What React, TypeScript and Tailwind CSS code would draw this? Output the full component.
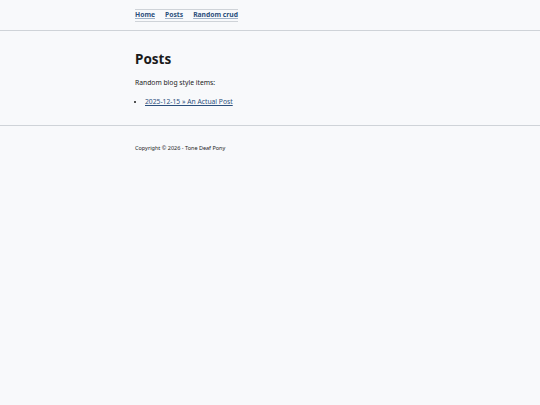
export default function App() {
  return (
    <div className="min-h-[405px] bg-[#f8f9fb] text-[#1b1b1b] text-[6.75px] leading-[1.5]" style={{ fontFamily: '"Noto Sans", sans-serif' }}>
      <header className="border-b border-[#cfd3d8] pt-[9px] pb-[8px]">
        <div className="mx-auto w-[270px]">
          <nav className="inline-flex gap-[10px] border-y border-[#cfd3d8] leading-[10px] pb-[1px]">
            <a href="#" className="font-bold text-[#2b4f7c] underline decoration-[#9fb2c8]">Home</a>
            <a href="#" className="font-bold text-[#2b4f7c] underline decoration-[#9fb2c8]">Posts</a>
            <a href="#" className="font-bold text-[#2b4f7c] underline decoration-[#9fb2c8]">Random crud</a>
          </nav>
        </div>
      </header>
      <main className="mx-auto w-[270px] pt-[20px] pb-[18px]">
        <h1 className="text-[13.5px] font-bold leading-[1.3] mb-[9px]">Posts</h1>
        <p className="mb-[9px]">Random blog style items:</p>
        <ul className="list-disc pl-[10px]">
          <li>
            <a href="#" className="text-[#2b4f7c] underline">2025-12-15 » An Actual Post</a>
          </li>
        </ul>
      </main>
      <footer className="border-t border-[#cfd3d8] pt-[18px]">
        <div className="mx-auto w-[270px] text-[5.5px]">Copyright © 2026 - Tone Deaf Pony</div>
      </footer>
    </div>
  );
}
